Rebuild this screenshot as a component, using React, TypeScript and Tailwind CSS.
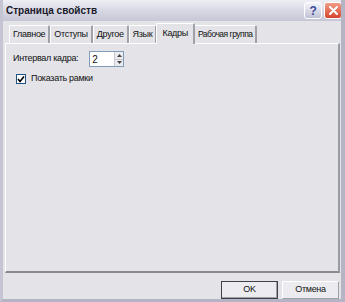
import { useState } from "react";

const tabs = ["Главное", "Отступы", "Другое", "Язык", "Кадры", "Рабочая группа"];

export default function App() {
  const [active, setActive] = useState(4);
  const [value, setValue] = useState(2);
  const [frames, setFrames] = useState(true);

  return (
    <div
      className="w-[345px] h-[302px] flex flex-col bg-[#e3e3e8] border-l-[3px] border-r-[4px] border-b-[3px] border-l-[#c4c4d2] border-r-[#b4b4c4] border-b-[#b4b4c4] text-[9px] tracking-[-0.3px] text-[#111] overflow-hidden"
      style={{ fontFamily: '"Liberation Sans", Arial, sans-serif' }}
    >
      {/* ── Title bar ─────────────────────────────────────────── */}
      <div className="h-[21px] -ml-[3px] -mr-[4px] flex items-center justify-between pl-[6px] pr-[3px] bg-gradient-to-b from-[#eeeef4] via-[#d8d8e4] to-[#c6c6d6] shrink-0">
        <span className="font-bold text-[10px] tracking-normal text-[#1a1a2a]">Страница свойств</span>
        <div className="flex gap-[2px]">
          <button className="w-[18px] h-[17px] rounded-[3px] border border-white bg-gradient-to-b from-[#f4f4fa] to-[#bfc2d6] text-[#3b4a9a] font-bold text-[12px] leading-none flex items-center justify-center">
            ?
          </button>
          <button className="w-[18px] h-[17px] rounded-[3px] border border-white bg-gradient-to-b from-[#f09a86] to-[#d4442a] flex items-center justify-center">
            <svg width="9" height="9" viewBox="0 0 9 9">
              <path d="M1 1 L8 8 M8 1 L1 8" stroke="white" strokeWidth="2" strokeLinecap="round" />
            </svg>
          </button>
        </div>
      </div>

      {/* ── Tabs ──────────────────────────────────────────────── */}
      <div className="flex items-end pl-[6px] pt-[2px] h-[22px] shrink-0">
        {tabs.map((t, i) =>
          i === active ? (
            <button
              key={t}
              onClick={() => setActive(i)}
              className="relative z-10 h-[21px] -mb-[1px] -mx-[1px] px-[5px] bg-[#e3e3e8] border-t border-l border-white border-r-2 border-r-[#a0a0a8] rounded-t-[2px]"
            >
              {t}
            </button>
          ) : (
            <button
              key={t}
              onClick={() => setActive(i)}
              className={`h-[18px] px-[3px] bg-[#e3e3e8] border-t border-l border-white border-r-2 border-r-[#a0a0a8] rounded-t-[2px] ${
                i === 5 ? "text-[8.5px] tracking-[-0.5px]" : ""
              }`}
            >
              {t}
            </button>
          )
        )}
      </div>

      {/* ── Tab panel ─────────────────────────────────────────── */}
      <div className="ml-[2px] mr-[1px] h-[230px] border-t border-l border-white border-r-2 border-b-2 border-r-[#9a9aa4] border-b-[#8a8a94] px-[7px] pt-[7px]">
        <div className="flex items-center gap-[11px]">
          <span>Интервал кадра:</span>
          <div className="flex h-[16px] border border-[#7f9db9] bg-white">
            <input
              value={value}
              onChange={(e) => setValue(Number(e.target.value) || 0)}
              className="w-[24px] px-[2px] outline-none bg-white text-[10px]"
            />
            <div className="flex flex-col w-[9px]">
              <button
                onClick={() => setValue(value + 1)}
                className="flex-1 bg-[#ececf0] border-l border-[#c8c8d0] flex items-center justify-center"
              >
                <svg width="5" height="3" viewBox="0 0 5 3"><path d="M0 3 L2.5 0 L5 3 Z" fill="#444" /></svg>
              </button>
              <button
                onClick={() => setValue(Math.max(0, value - 1))}
                className="flex-1 bg-[#ececf0] border-l border-t border-[#c8c8d0] flex items-center justify-center"
              >
                <svg width="5" height="3" viewBox="0 0 5 3"><path d="M0 0 L2.5 3 L5 0 Z" fill="#444" /></svg>
              </button>
            </div>
          </div>
        </div>

        <label className="flex items-center gap-[5px] mt-[5px] ml-[3px]">
          <button
            onClick={() => setFrames(!frames)}
            className="w-[10px] h-[10px] border border-[#1c5180] bg-white flex items-center justify-center"
          >
            {frames && (
              <svg width="8" height="8" viewBox="0 0 8 8">
                <path d="M1 4 L3 6.5 L7 1.5" stroke="#000" strokeWidth="1.6" fill="none" />
              </svg>
            )}
          </button>
          <span>Показать рамки</span>
        </label>
      </div>

      {/* ── Buttons ───────────────────────────────────────────── */}
      <div className="flex justify-end gap-[4px] pr-[2px] pt-[8px]">
        <button className="w-[57px] h-[18px] bg-[#ececf0] border border-[#404048] shadow-[inset_-1px_-1px_0_#a0a0a8]">OK</button>
        <button className="w-[57px] h-[18px] bg-[#ececf0] border border-[#a0a0a8] border-t-white border-l-white">Отмена</button>
      </div>
    </div>
  );
}
